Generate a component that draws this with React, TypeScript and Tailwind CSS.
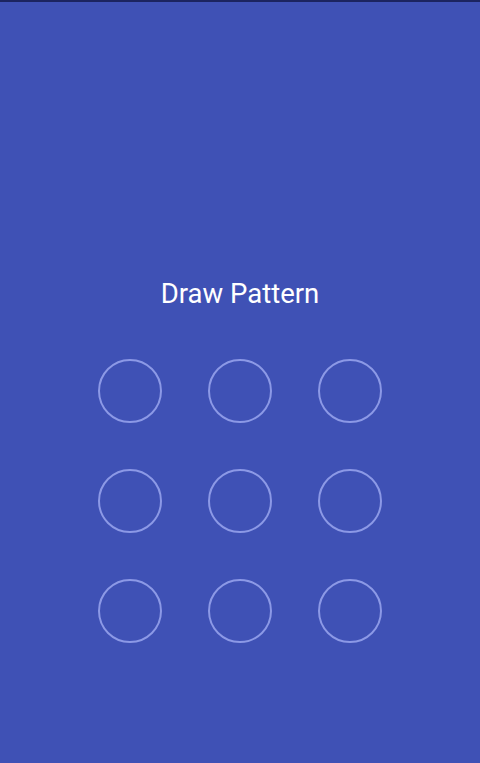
export default function App() {
  const dots = Array.from({ length: 9 }, (_, i) => i);

  return (
    <div className="flex min-h-[763px] flex-col bg-[#3f51b5] font-['Roboto',sans-serif]">
      {/* status bar edge */}
      <div className="h-[2px] bg-[#1c2460]" />

      <div className="flex flex-col items-center pt-[276px]">
        <h1 className="text-[27.5px] leading-[32px] font-normal text-white">Draw Pattern</h1>

        <div className="mt-[49px] grid grid-cols-3 gap-[46px]">
          {dots.map((d) => (
            <div
              key={d}
              className="h-[64px] w-[64px] rounded-full border-2 border-[#8c99e6]"
            />
          ))}
        </div>
      </div>
    </div>
  );
}
